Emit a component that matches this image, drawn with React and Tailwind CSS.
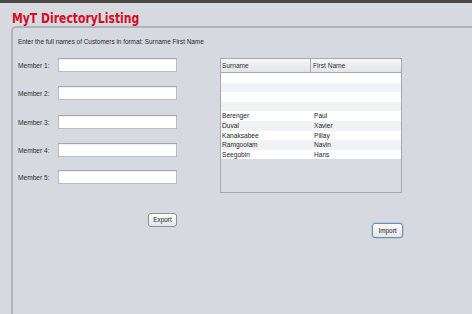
import React from "react";

const members = [
  { label: "Member 1:", mt: "mt-[13px]" },
  { label: "Member 2:", mt: "mt-[14px]" },
  { label: "Member 3:", mt: "mt-[15px]" },
  { label: "Member 4:", mt: "mt-[14px]" },
  { label: "Member 5:", mt: "mt-[13px]" },
];

const rows = [
  ["", ""],
  ["", ""],
  ["", ""],
  ["", ""],
  ["Berenger", "Paul"],
  ["Duval", "Xavier"],
  ["Kanaksabee", "Pillay"],
  ["Ramgoolam", "Navin"],
  ["Seegobin", "Hans"],
];

export default function App() {
  return (
    <div
      className="w-[472px] h-[314px] overflow-hidden bg-[#d6d9e0] flex flex-col"
      style={{ fontFamily: '"Liberation Sans", Arial, sans-serif' }}
    >
      <div className="h-[3px] bg-[#4a4944] shrink-0" />
      <div
        className="h-[23px] shrink-0 pl-[12px] pt-[8px] text-[14px] leading-[14px] font-bold text-[#d40d1f]"
        style={{ fontFamily: '"DejaVu Sans Condensed", "DejaVu Sans", sans-serif' }}
      >
        <span className="inline-block origin-left scale-x-[0.86] whitespace-nowrap">MyT DirectoryListing</span>
      </div>
      <div className="flex-1 ml-[11px] border-l-2 border-t-2 border-[#b0b3bb] rounded-tl-[5px] flex flex-col">
        <div className="pl-[5px] pt-[10px] h-[20px] text-[6.4px] leading-[8px] text-[#2b2b2b]">
          Enter the full names of Customers in format: Surname First Name
        </div>
        <div className="flex">
          <div className="w-[207px] pl-[5px] flex flex-col shrink-0">
            <div className="h-[1px]" />
            {members.map((m, i) => (
              <div key={i} className={`flex items-center h-[14px] ${i === 0 ? "mt-[9px]" : m.mt}`}>
                <div className="w-[40px] text-[6.6px] text-[#2d2d2d] pt-[1px]">{m.label}</div>
                <div className="w-[119px] h-[14px] bg-white border border-[#b9bcc3] border-t-[#a3a6ad] shadow-[inset_0_1px_1px_rgba(0,0,0,0.06)]" />
              </div>
            ))}
            <div className="mt-[29px] ml-[130px]">
              <div className="w-[29px] h-[14px] flex items-center justify-center rounded-[3px] border border-[#8d9097] bg-gradient-to-b from-[#fdfdfd] to-[#e4e5e8] text-[6.4px] text-[#222]">
                Export
              </div>
            </div>
          </div>
          <div className="flex flex-col">
            <div className="mt-[10px] w-[182px] h-[135px] border border-[#a5a8b0] flex flex-col bg-[#d8dbe1]">
              <div className="flex h-[14px] shrink-0 bg-gradient-to-b from-[#f6f7f9] to-[#e2e4e8] border-b border-[#a5a8b0] text-[6.6px] text-[#333]">
                <div className="w-[90px] border-r border-[#a5a8b0] pl-[1px] flex items-center">Surname</div>
                <div className="flex-1 pl-[2px] flex items-center">First Name</div>
              </div>
              {rows.map((r, i) => (
                <div
                  key={i}
                  className={`flex h-[9.6px] text-[6.6px] leading-[9.6px] text-[#262626] ${
                    i % 2 === 0 ? "bg-white" : "bg-[#f1f2f4]"
                  }`}
                >
                  <div className="w-[91px] pl-[1px]">{r[0]}</div>
                  <div className="flex-1 pl-[2px]">{r[1]}</div>
                </div>
              ))}
            </div>
            <div className="mt-[30px] ml-[152px]">
              <div className="w-[31px] h-[15px] flex items-center justify-center rounded-[3px] border border-[#6e8db0] bg-gradient-to-b from-[#fdfdfd] to-[#e4e5e8] text-[6.4px] text-[#222] shadow-[0_0_0_0.5px_#9fb6cf]">
                Import
              </div>
            </div>
          </div>
        </div>
      </div>
    </div>
  );
}
